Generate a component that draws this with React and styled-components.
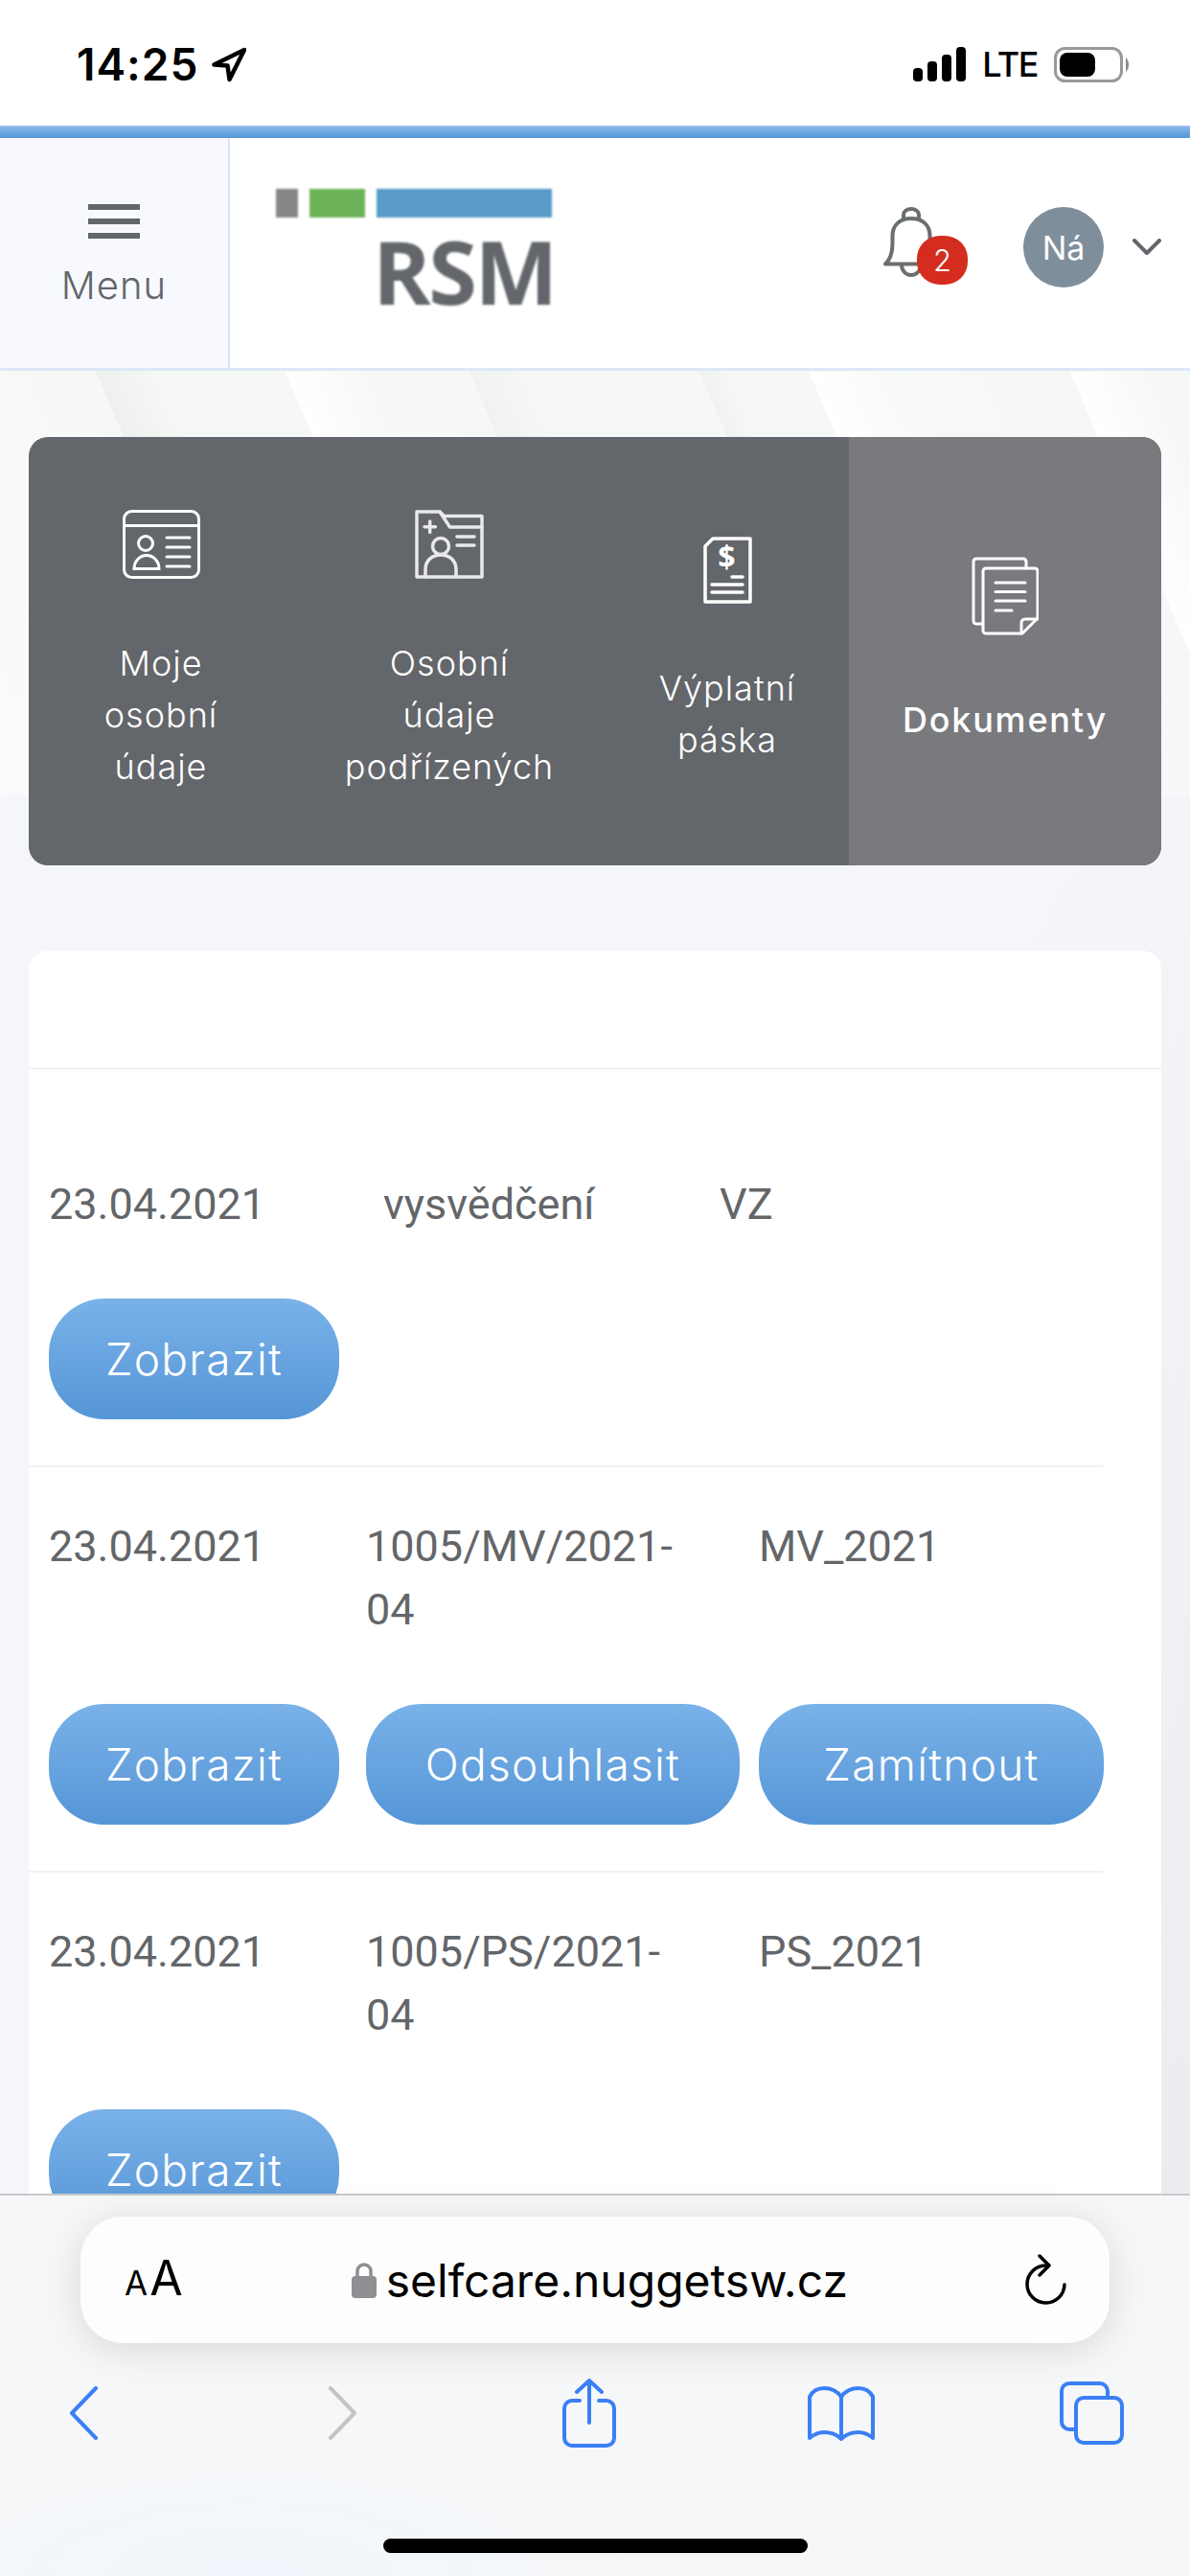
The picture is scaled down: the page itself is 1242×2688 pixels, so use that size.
import React from 'react';
import styled, { createGlobalStyle } from 'styled-components';

const GlobalStyle = createGlobalStyle`
  html, body {
    margin: 0;
    padding: 0;
    background: #fff;
  }
  * {
    box-sizing: border-box;
  }
`;

const UI_FONT = `Inter, "Noto Sans", sans-serif`;

const NAV_ITEMS = [
  { label: ['Moje', 'osobní', 'údaje'], icon: <IdCardIcon /> },
  { label: ['Osobní', 'údaje', 'podřízených'], icon: <FolderPersonIcon /> },
  { label: ['Výplatní', 'páska'], icon: <PayslipIcon /> },
  { label: ['Dokumenty'], icon: <DocumentsIcon />, active: true },
];

const SHOW = { label: 'Zobrazit', width: 303 };
const APPROVE = { label: 'Odsouhlasit', width: 390 };
const REJECT = { label: 'Zamítnout', width: 360 };

const DOCUMENTS = [
  {
    columns: '349px 351px 1fr',
    date: '23.04.2021',
    name: 'vysvědčení',
    code: 'VZ',
    actions: [SHOW],
    first: true,
  },
  {
    columns: '331px 410px 1fr',
    date: '23.04.2021',
    name: '1005/MV/2021-04',
    code: 'MV_2021',
    actions: [SHOW, APPROVE, REJECT],
  },
  {
    columns: '331px 410px 1fr',
    date: '23.04.2021',
    name: '1005/PS/2021-04',
    code: 'PS_2021',
    actions: [SHOW],
  },
];

function IdCardIcon() {
  return (
    <svg width="81" height="72" viewBox="0 0 81 72" fill="none" stroke="#fff" strokeWidth="3" strokeLinecap="round">
      <rect x="1.5" y="1.5" width="78" height="69" rx="8" />
      <path d="M1.5 16.5H79.5" />
      <circle cx="24" cy="35" r="7.5" />
      <path d="M12 61.5c0-8 6-14 13-14s13 6 13 14z" />
      <path d="M46 29H70M46 39H70M46 49H70M46 59H70" />
    </svg>
  );
}

function FolderPersonIcon() {
  return (
    <svg width="72" height="72" viewBox="0 0 72 72" fill="none" stroke="#e9e9e9" strokeWidth="3.5" strokeLinecap="round" strokeLinejoin="round">
      <path d="M2 2H26L30.5 6.5H70V70H2Z" />
      <path d="M26 2L36.5 18H70" />
      <path d="M15.7 12V23.5M10 17.7H21.5" />
      <circle cx="27" cy="38" r="8.5" />
      <path d="M11 70V62c0-9 7-15 16-15s16 6 16 15v8" />
      <path d="M44 28H62M44 37H62" />
    </svg>
  );
}

function PayslipIcon() {
  return (
    <svg width="51" height="70" viewBox="0 0 51 70" fill="none" stroke="#fff" strokeWidth="3.5" strokeLinecap="round" strokeLinejoin="round">
      <path d="M2 10L10 2H49V68H2Z" />
      <text x="25" y="33" textAnchor="middle" fontFamily="Open Sans, sans-serif" fontWeight="700" fontSize="32" fill="#fff" stroke="none">$</text>
      <path d="M30 42H41M9 50H41M9 58H41" />
    </svg>
  );
}

function DocumentsIcon() {
  return (
    <svg width="70" height="82" viewBox="0 0 70 82" fill="none" stroke="#fff" strokeWidth="3" strokeLinecap="round" strokeLinejoin="round">
      <path d="M11 70H5a3 3 0 0 1-3-3V5a3 3 0 0 1 3-3H54a3 3 0 0 1 3 3V12" />
      <path d="M15 12H66a3 3 0 0 1 3 3V64L53 80H15a3 3 0 0 1-3-3V15a3 3 0 0 1 3-3Z" />
      <path d="M52 80V69a4 4 0 0 1 4-4H69" />
      <path d="M25 27H56M25 36.5H56M25 46H56M25 56H42" />
    </svg>
  );
}

const StatusBar = styled.div`
  height: 131px;
  background: #fff;
  padding: 3px 64px 0 80px;
  display: flex;
  align-items: center;
  justify-content: space-between;
`;

const StatusGroup = styled.div`
  display: flex;
  align-items: center;
  gap: ${(p) => p.$gap}px;
`;

const Time = styled.span`
  font-family: ${UI_FONT};
  font-size: 46px;
  font-weight: 600;
  line-height: 46px;
  letter-spacing: 1px;
  color: #000;
`;

const NetworkLabel = styled.span`
  font-family: ${UI_FONT};
  font-size: 36px;
  font-weight: 500;
  line-height: 36px;
  letter-spacing: -1.5px;
  color: #000;
`;

const TopBar = styled.div`
  height: 13px;
  background: linear-gradient(#a9c8e8 0, #84b6e9 2px, #5595d6 100%);
`;

const Header = styled.header`
  height: 243px;
  background: #fff;
  border-bottom: 3px solid #dbe8f5;
  display: flex;
  align-items: stretch;
`;

const MenuButton = styled.div`
  width: 240px;
  padding-top: 69px;
  background: #f7f9fe;
  border-right: 2px solid #d8e6f3;
  display: flex;
  flex-direction: column;
  align-items: center;
  color: #63666a;
`;

const Burger = styled.div`
  width: 54px;
  display: flex;
  flex-direction: column;
  gap: 9px;
  margin-bottom: 27px;

  span {
    height: 6px;
    background: #63666a;
  }
`;

const MenuLabel = styled.span`
  font-family: ${UI_FONT};
  font-size: 40px;
  font-weight: 300;
  line-height: 44px;
  letter-spacing: 1px;
`;

const Logo = styled.div`
  margin: 53px 0 0 48px;
  width: 288px;
  filter: blur(0.8px);
`;

const LogoBars = styled.div`
  display: flex;
  height: 30px;
  gap: 12px;
`;

const LogoBar = styled.div`
  width: ${(p) => p.$width}px;
  background: ${(p) => p.$color};
`;

const LogoText = styled.div`
  margin: 10px 0 0 101px;
  font-family: "Open Sans", sans-serif;
  font-size: 92px;
  font-weight: 700;
  line-height: 92px;
  letter-spacing: -2.5px;
  color: #63666a;
`;

const HeaderTools = styled.div`
  margin-left: auto;
  padding: 72px 30px 0 0;
  display: flex;
  align-items: flex-start;
`;

const BellWrap = styled.div`
  position: relative;
  width: 88px;
  height: 84px;
  margin-right: 58px;
`;

const Badge = styled.span`
  position: absolute;
  left: 35px;
  top: 30px;
  width: 53px;
  height: 51px;
  border-radius: 46%;
  background: #d42d1f;
  color: #fff;
  font-family: ${UI_FONT};
  font-size: 31px;
  font-weight: 300;
  display: flex;
  align-items: center;
  justify-content: center;
`;

const Avatar = styled.div`
  width: 84px;
  height: 84px;
  border-radius: 50%;
  background: #7f8e9b;
  color: #fff;
  font-family: ${UI_FONT};
  font-size: 34px;
  font-weight: 400;
  display: flex;
  align-items: center;
  justify-content: center;
`;

const Chevron = styled.svg`
  margin: 33px 0 0 30px;
`;

const Main = styled.main`
  height: 2301px;
  padding: 69px 30px 0;
  overflow: hidden;
  background:
    linear-gradient(
        67deg,
        #fbfbfb 0,
        #f6f7f7 265px,
        #eef0f0 265px,
        #f6f8f7 325px,
        #f6f8f7 447px,
        #ffffff 447px,
        #f7f8f8 520px,
        #f6f7f7 624px,
        #f0f1f1 624px,
        #f6f7f7 680px,
        #f6f7f7 845px,
        #f0f1f1 845px,
        #f6f7f7 872px,
        #f6f7f7 950px,
        #ffffff 950px,
        #f8f9f9 1029px,
        #f6f7f7 1201px,
        #ffffff 1201px,
        #f6f7f7 1280px
      )
      top / 100% 443px no-repeat,
    linear-gradient(120deg, #f5f6f9 55%, #e8eaee 100%);
`;

const Nav = styled.nav`
  height: 447px;
  border-radius: 20px;
  overflow: hidden;
  background: #63666a;
  display: grid;
  grid-template-columns: 276px 326px 254px 326px;
`;

const NavItem = styled.div`
  background: ${(p) => (p.$active ? '#797a7e' : 'transparent')};
  color: #fff;
  display: flex;
  flex-direction: column;
  align-items: center;
  justify-content: center;
  text-align: center;
  font-family: ${UI_FONT};
  font-size: 36px;
  font-weight: ${(p) => (p.$active ? 500 : 300)};
  line-height: 54px;
  letter-spacing: ${(p) => (p.$active ? '1.8px' : '1px')};
`;

const NavIcon = styled.div`
  display: flex;
  margin-bottom: 61px;
`;

const Card = styled.section`
  margin-top: 89px;
  background: #fff;
  border-radius: 20px 20px 0 0;
  min-height: 1400px;
`;

const CardHeader = styled.div`
  height: 124px;
  border-bottom: 2px solid #f0f1f2;
`;

const DocRow = styled.div`
  width: 1121px;
  padding: ${(p) => (p.$first ? '108px' : '50px')} 0 48px 21px;
  border-bottom: 2px solid #f0f1f2;
  display: grid;
  grid-template-columns: ${(p) => p.$columns};
  row-gap: 65px;
  font-family: Roboto, sans-serif;
  font-size: 45px;
  line-height: 66px;
  color: #636669;
`;

const Cell = styled.div`
  min-width: 0;
  padding-right: 60px;
`;

const ActionButton = styled.button`
  width: ${(p) => p.$width}px;
  height: 126px;
  padding: 0;
  border: none;
  border-radius: 58px;
  background: linear-gradient(#7ab2e9, #5595d6);
  color: #fff;
  font-family: ${UI_FONT};
  font-size: 46px;
  font-weight: 300;
  letter-spacing: 1.3px;
  justify-self: start;
  white-space: nowrap;
`;

const SafariBar = styled.div`
  position: absolute;
  left: 0;
  right: 0;
  bottom: 0;
  height: 399px;
  border-top: 2px solid #c8c9cc;
  background:
    radial-gradient(400px 140px at 260px 399px, #f1f6fc, transparent),
    #f6f7f8;
`;

const AddressPill = styled.div`
  position: absolute;
  left: 84px;
  top: 22px;
  width: 1074px;
  height: 132px;
  padding: 0 45px 0 46px;
  border-radius: 44px;
  background: #fdfdfd;
  box-shadow: 0 6px 40px rgba(0, 0, 0, 0.13);
  display: flex;
  align-items: center;
  justify-content: space-between;
`;

const TextSize = styled.span`
  font-family: ${UI_FONT};
  font-weight: 400;
  color: #000;
  font-size: 50px;
  line-height: 50px;

  small {
    font-size: 35px;
    margin-right: 2px;
  }
`;

const Address = styled.div`
  display: flex;
  align-items: center;
  gap: 10px;
  margin-left: -9px;
  font-family: ${UI_FONT};
  font-size: 48px;
  color: #000;
`;

const Toolbar = styled.div`
  position: absolute;
  left: 72px;
  top: 191px;
  display: grid;
  grid-template-columns: 270px 245px 256px 263px auto;
  align-items: center;
`;

const HomeIndicator = styled.div`
  position: absolute;
  left: 400px;
  bottom: 24px;
  width: 443px;
  height: 15px;
  border-radius: 8px;
  background: #000;
`;

const Page = styled.div`
  position: relative;
  width: 1242px;
  height: 2688px;
  overflow: hidden;
`;

const SAFARI_BLUE = '#3a7ff6';

const App = () => (
  <Page>
    <GlobalStyle />
    <StatusBar>
      <StatusGroup $gap={14}>
        <Time>14:25</Time>
        <svg width="36" height="37" viewBox="0 0 36 37" fill="none" stroke="#000" strokeWidth="4.5" strokeLinejoin="round">
          <path d="M34 3L2.5 18.5L16.5 19.5L18.5 34Z" />
        </svg>
      </StatusGroup>
      <StatusGroup $gap={17}>
        <svg width="56" height="36" viewBox="0 0 56 36" fill="#000">
          <rect x="1" y="22" width="10" height="14" rx="4" />
          <rect x="16" y="15" width="10" height="21" rx="4" />
          <rect x="31" y="8" width="10" height="28" rx="4" />
          <rect x="46" y="0" width="10" height="36" rx="4" />
        </svg>
        <NetworkLabel>LTE</NetworkLabel>
        <svg width="78" height="37" viewBox="0 0 78 37" fill="none">
          <rect x="1.5" y="1.5" width="69" height="34" rx="10" stroke="#999" strokeWidth="3" />
          <rect x="6" y="6" width="37" height="25" rx="8" fill="#000" />
          <path d="M75 11c2 2 3 4.500 3 7.500s-1 5.500-3 7.500z" fill="#888" />
        </svg>
      </StatusGroup>
    </StatusBar>
    <TopBar />
    <Header>
      <MenuButton>
        <Burger>
          <span />
          <span />
          <span />
        </Burger>
        <MenuLabel>Menu</MenuLabel>
      </MenuButton>
      <Logo>
        <LogoBars>
          <LogoBar $width={23} $color="#858789" />
          <LogoBar $width={58} $color="#6db357" />
          <LogoBar $width={184} $color="#5a9bc9" />
        </LogoBars>
        <LogoText>RSM</LogoText>
      </Logo>
      <HeaderTools>
        <BellWrap>
          <svg width="52" height="73" viewBox="0 0 52 73" fill="none" stroke="#6b6e70" strokeWidth="4" strokeLinecap="round" strokeLinejoin="round">
            <path d="M21 12V8a8 6 0 0 1 16 0V12" />
            <path d="M2 59.500H50M2 59.500C7 55 9.500 47 9.500 38V30C9.500 19 17 12 29 12C41 12 48.500 19 48.500 30V38" />
            <path d="M19 60c0 6 4 11 10 11s10-5 10-11" />
          </svg>
          <Badge>2</Badge>
        </BellWrap>
        <Avatar>Ná</Avatar>
        <Chevron width="30" height="18" viewBox="0 0 30 18" fill="none" stroke="#63666a" strokeWidth="4" strokeLinecap="round" strokeLinejoin="round">
          <path d="M2 2L15 15L28 2" />
        </Chevron>
      </HeaderTools>
    </Header>
    <Main>
      <Nav>
        {NAV_ITEMS.map((item) => (
          <NavItem key={item.label[0]} $active={item.active}>
            <NavIcon>{item.icon}</NavIcon>
            {item.label.map((line) => (
              <span key={line}>{line}</span>
            ))}
          </NavItem>
        ))}
      </Nav>
      <Card>
        <CardHeader />
        {DOCUMENTS.map((doc) => (
          <DocRow key={doc.name} $columns={doc.columns} $first={doc.first}>
            <Cell>{doc.date}</Cell>
            <Cell>{doc.name}</Cell>
            <Cell>{doc.code}</Cell>
            {doc.actions.map((action) => (
              <ActionButton key={action.label} $width={action.width}>
                {action.label}
              </ActionButton>
            ))}
          </DocRow>
        ))}
      </Card>
    </Main>
    <SafariBar>
      <AddressPill>
        <TextSize>
          <small>A</small>A
        </TextSize>
        <Address>
          <svg width="26" height="38" viewBox="0 0 26 38" fill="none">
            <path d="M6 16V10a7 7 0 0 1 14 0v6" stroke="#8e8e93" strokeWidth="3.500" />
            <rect x="0" y="15" width="26" height="23" rx="4" fill="#8e8e93" />
          </svg>
          selfcare.nuggetsw.cz
        </Address>
        <svg width="43" height="54" viewBox="0 0 43 54" fill="none" stroke="#000" strokeWidth="3.500" strokeLinecap="round" strokeLinejoin="round">
          <path d="M21 12A19.500 19.500 0 1 0 41 32" />
          <path d="M15 2L25 12L15 22" />
        </svg>
      </AddressPill>
      <Toolbar>
        <svg width="32" height="56" viewBox="0 0 32 56" fill="none" stroke={SAFARI_BLUE} strokeWidth="4" strokeLinecap="round" strokeLinejoin="round">
          <path d="M28 2L3 28L28 54" />
        </svg>
        <svg width="32" height="56" viewBox="0 0 32 56" fill="none" stroke="#c4c4c6" strokeWidth="4" strokeLinecap="round" strokeLinejoin="round">
          <path d="M3 2L28 28L3 54" />
        </svg>
        <svg width="56" height="72" viewBox="0 0 56 72" fill="none" stroke={SAFARI_BLUE} strokeWidth="4" strokeLinecap="round" strokeLinejoin="round">
          <path d="M18 23H10a8 8 0 0 0-8 8V62a8 8 0 0 0 8 8H46a8 8 0 0 0 8-8V31a8 8 0 0 0-8-8H38" />
          <path d="M28 46V2M15 14L28 2L41 14" />
        </svg>
        <svg width="70" height="58" viewBox="0 0 70 58" fill="none" stroke={SAFARI_BLUE} strokeWidth="4" strokeLinecap="round" strokeLinejoin="round">
          <path d="M35 12C30 5 22 3 17 3C10 3 5 6 2 12V55C8 50 12 49 17 49C25 49 31 52 35 56C39 52 45 49 53 49C58 49 62 50 68 55V12C65 6 60 3 53 3C48 3 40 5 35 12V56" />
        </svg>
        <svg width="67" height="66" viewBox="0 0 67 66" fill="none" stroke={SAFARI_BLUE} strokeWidth="4" strokeLinecap="round" strokeLinejoin="round">
          <path d="M50 16V10a8 8 0 0 0-8-8H10a8 8 0 0 0-8 8v32a8 8 0 0 0 8 8h6" />
          <rect x="17" y="17" width="48" height="47" rx="8" />
        </svg>
      </Toolbar>
      <HomeIndicator />
    </SafariBar>
  </Page>
);

export default App;
